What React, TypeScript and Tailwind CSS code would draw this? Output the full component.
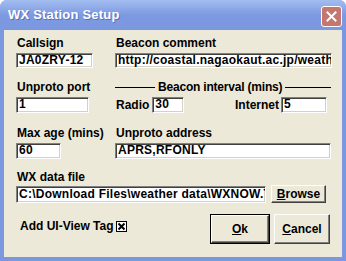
import React from "react";

const sunken =
  "bg-white border border-t-[#808080] border-l-[#808080] border-b-white border-r-white shadow-[inset_1px_1px_0_#404040,inset_-1px_-1px_0_#d4d0c8]";

function Field({ value, className }: { value: string; className: string }) {
  return (
    <div className={`${sunken} ${className} overflow-hidden whitespace-nowrap pl-[2px] text-[12px] font-bold leading-[13px] tracking-[0.25px] text-black`}>
      {value}
    </div>
  );
}

function Label({ children, className = "" }: { children: React.ReactNode; className?: string }) {
  return <div className={`pl-[1px] text-[12px] font-bold leading-[14px] text-black whitespace-nowrap ${className}`}>{children}</div>;
}

function Btn({ children, def = false, className = "" }: { children: React.ReactNode; def?: boolean; className?: string }) {
  const inner = (
    <div className="flex h-full w-full items-center justify-center bg-[#ece9d8] border border-t-white border-l-white border-b-[#404040] border-r-[#404040] shadow-[inset_-1px_-1px_0_#808080,inset_1px_1px_0_#ece9d8] text-[12px] font-bold text-black">
      {children}
    </div>
  );
  if (def) return <div className={`border border-black ${className}`}>{inner}</div>;
  return <div className={className}>{inner}</div>;
}

export default function App() {
  return (
    <div
      className="flex h-[261px] w-[346px] flex-col overflow-hidden rounded-t-[7px] bg-[#7b97e0]"
      style={{ fontFamily: '"Liberation Sans", Arial, sans-serif' }}
    >
      <div className="flex h-[30px] items-center justify-between bg-gradient-to-b from-[#a3bdf0] via-[#7d99e1] to-[#7b97e0] pl-[8px] pr-[4px]">
        <span className="text-[13px] font-bold tracking-[0.2px] text-white [text-shadow:1px_1px_0_#5a70b8]">WX Station Setup</span>
        <div className="mt-[2px] flex h-[21px] w-[21px] items-center justify-center rounded-[3px] border border-white bg-[#c6756f]">
          <svg width="11" height="11" viewBox="0 0 11 11">
            <path d="M1.5 1.5 L9.5 9.5 M9.5 1.5 L1.5 9.5" stroke="white" strokeWidth="2" strokeLinecap="square" />
          </svg>
        </div>
      </div>
      <div className="mx-[4px] mb-[4px] flex flex-1 flex-col bg-[#ece9d8] pl-[12px] pt-[6px]">
        {/* Row 1 */}
        <div className="flex">
          <div className="w-[99px]">
            <Label>Callsign</Label>
            <Field value="JA0ZRY-12" className="mt-[3px] h-[15px] w-[77px]" />
          </div>
          <div>
            <Label>Beacon comment</Label>
            <Field value="http://coastal.nagaokaut.ac.jp/weather" className="mt-[3px] h-[15px] w-[217px]" />
          </div>
        </div>
        {/* Row 2 */}
        <div className="mt-[12px] flex">
          <div className="w-[99px]">
            <Label>Unproto port</Label>
            <Field value="1" className="mt-[3px] h-[16px] w-[73px]" />
          </div>
          <div className="w-[216px]">
            <div className="flex h-[14px] items-center">
              <div className="h-px w-[40px] bg-black" />
              <span className="px-[3px] text-[12px] font-bold tracking-[-0.2px] text-black">Beacon interval (mins)</span>
              <div className="h-px flex-1 bg-black" />
            </div>
            <div className="mt-[3px] flex items-center">
              <Label>Radio</Label>
              <Field value="30" className="ml-[3px] h-[16px] w-[32px]" />
              <div className="flex-1" />
              <Label>Internet</Label>
              <Field value="5" className="ml-[2px] mr-[4px] h-[16px] w-[46px]" />
            </div>
          </div>
        </div>
        {/* Row 3 */}
        <div className="mt-[13px] flex">
          <div className="w-[99px]">
            <Label>Max age (mins)</Label>
            <Field value="60" className="mt-[3px] h-[16px] w-[45px]" />
          </div>
          <div>
            <Label>Unproto address</Label>
            <Field value="APRS,RFONLY" className="mt-[3px] h-[16px] w-[216px]" />
          </div>
        </div>
        {/* Row 4 */}
        <div className="mt-[11px]">
          <Label>WX data file</Label>
          <div className="mt-[1px] flex items-center">
            <Field value="C:\Download Files\weather data\WXNOW.TXT" className="h-[17px] w-[250px] leading-[15px]" />
            <Btn className="ml-[5px] h-[18px] w-[55px]">
              <span><span className="underline">B</span>rowse</span>
            </Btn>
          </div>
        </div>
        {/* Row 5 */}
        <div className="mt-[11px] flex items-start">
          <div className="ml-[4px] mt-[5px] flex items-center">
            <span className="text-[12px] font-bold leading-[14px] text-black">Add UI-View Tag</span>
            <div className="ml-[2px] flex h-[11px] w-[11px] items-center justify-center border border-black bg-white">
              <svg width="9" height="9" viewBox="0 0 9 9">
                <path d="M1.5 1.5 L7.5 7.5 M7.5 1.5 L1.5 7.5" stroke="black" strokeWidth="2" />
              </svg>
            </div>
          </div>
          <div className="flex-1" />
          <Btn def className="h-[30px] w-[60px]">
            <span><span className="underline">O</span>k</span>
          </Btn>
          <Btn className="ml-[4px] mr-[12px] h-[30px] w-[56px]">
            <span><span className="underline">C</span>ancel</span>
          </Btn>
        </div>
      </div>
    </div>
  );
}
